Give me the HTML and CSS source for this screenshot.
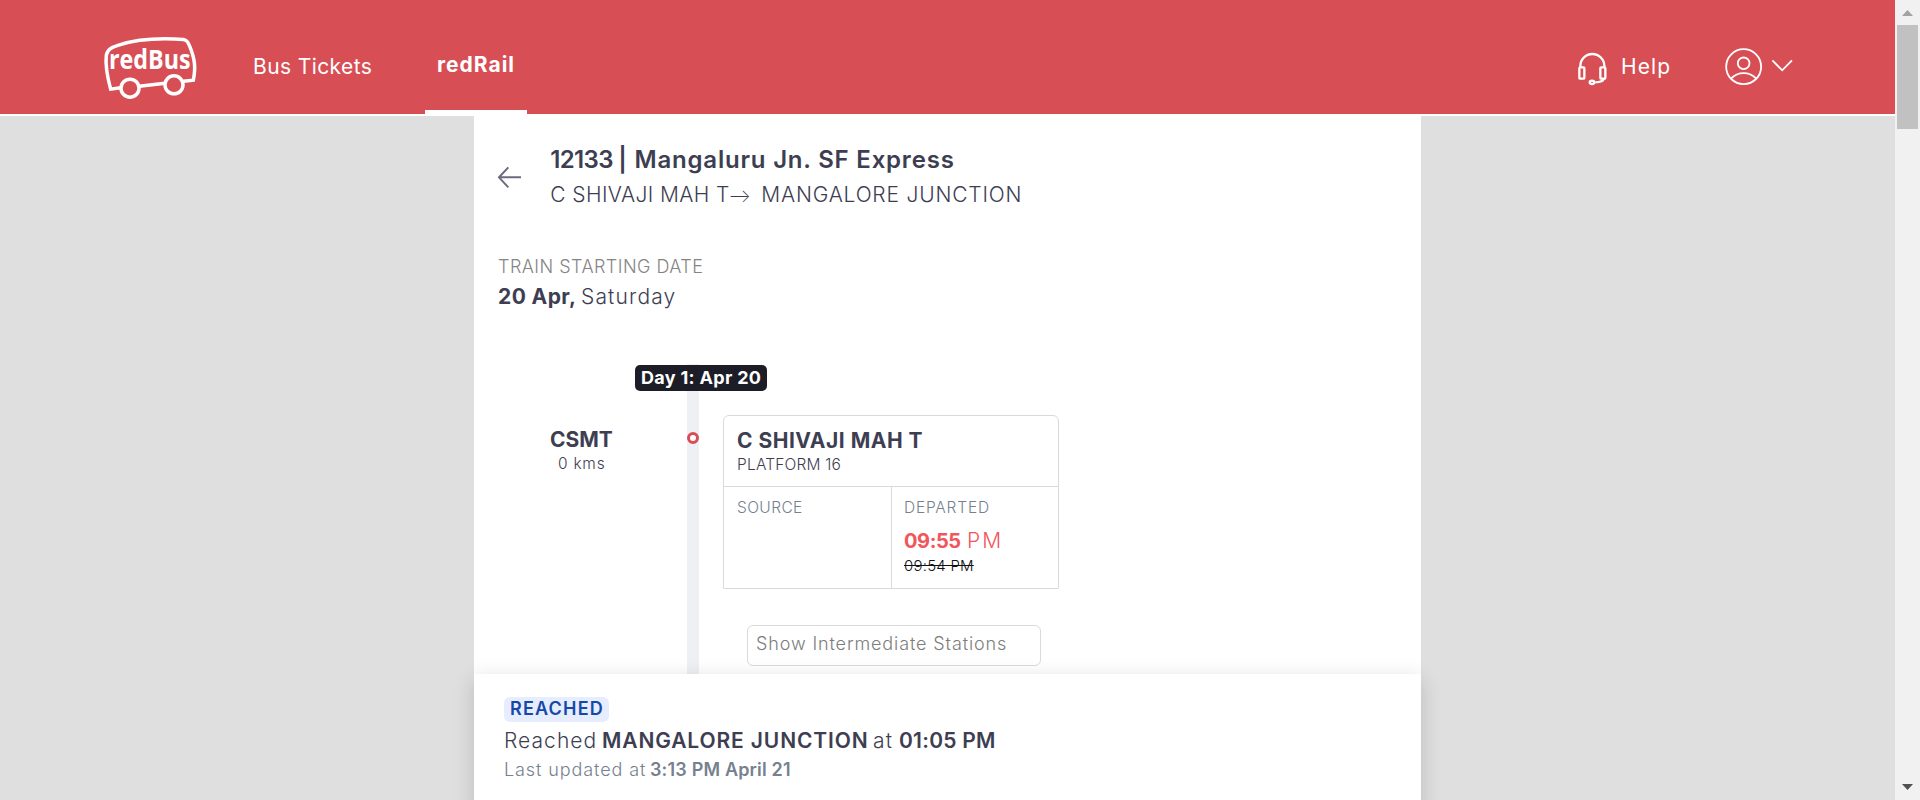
FILE: index.html
```
<!DOCTYPE html>
<html lang="en">
<head>
<meta charset="utf-8">
<title>redRail – Train running status</title>
<link rel="stylesheet" href="styles.css">
</head>
<body>
<div class="page">
  <header class="header">
    <svg class="logo" viewBox="18 18 282 188" fill="none" stroke="#fff" stroke-width="10.500">
      <path d="M68 173L38 177C28 140 22 100 25 75C28 58 40 52 62 45C110 29 170 22 256 28C266 29 270 34 275 48C290 85 294 110 286 150L256 153M124 168L201 159"/>
      <circle cx="96" cy="174" r="27"/>
      <circle cx="228" cy="164" r="27"/>
      <text class="logo-text" x="33" y="118" textLength="245" lengthAdjust="spacingAndGlyphs">redBus</text>
    </svg>
    <nav class="nav">
      <a class="nav-bus">Bus Tickets</a>
      <a class="nav-rail">redRail</a>
    </nav>
    <div class="account">
      <svg class="headset" viewBox="18 36 92 102" fill="none" stroke="#fff" stroke-width="7">
        <path d="M28 82V78A36 36 0 0 1 100 78V82M99 115C97 124 88 127 73 127"/>
        <rect x="25" y="82" width="15" height="34" rx="3"/>
        <rect x="88" y="82" width="15" height="34" rx="3"/>
        <ellipse cx="63" cy="127" rx="7" ry="5"/>
      </svg>
      <a class="help">Help</a>
      <svg class="user" viewBox="28 25 112 112" fill="none" stroke="#fff" stroke-width="5.500">
        <circle cx="84" cy="81" r="52.5"/>
        <circle cx="84" cy="71" r="17.5"/>
        <path d="M46 117C67 95 101 95 122 117"/>
      </svg>
      <svg class="chevron" viewBox="168 56 68 40" fill="none" stroke="#fff" stroke-width="5.500"><path d="M172 60L201.500 90L231 60"/></svg>
    </div>
  </header>

  <main class="sheet">
    <section class="title-row">
      <svg class="back" viewBox="20 20 76 68" fill="none" stroke="#6b6b7f" stroke-width="6"><path d="M92 54H26M54 24L26 54L54 84"/></svg>
      <div>
        <h1 class="train"><span class="number">12133 </span>| Mangaluru Jn. SF Express</h1>
        <div class="route"><span class="from">C SHIVAJI MAH T</span><span class="arrow">→</span><span class="to">MANGALORE JUNCTION</span></div>
      </div>
    </section>
    <section class="start">
      <div class="start-label">TRAIN STARTING DATE</div>
      <div class="start-date"><b>20 Apr,</b><span>Saturday</span></div>
    </section>
    <section class="timeline">
      <div class="stop">
        <div class="code">CSMT</div>
        <div class="kms">0 kms</div>
      </div>
      <div class="track"><span class="day">Day 1: Apr 20</span><span class="dot"></span></div>
      <div class="details">
        <article class="card">
          <div class="card-head">
            <div class="station">C SHIVAJI MAH T</div>
            <div class="platform">PLATFORM 16</div>
          </div>
          <div class="card-body">
            <div class="cell"><div class="label source">SOURCE</div></div>
            <div class="cell">
              <div class="label departed">DEPARTED</div>
              <div class="time"><b>09:55</b><span>PM</span></div>
              <div class="planned">09:54 PM</div>
            </div>
          </div>
        </article>
        <div class="show">Show Intermediate Stations</div>
      </div>
    </section>
  </main>

  <footer class="status">
    <div class="badge">REACHED</div>
    <div class="reached"><span class="r1">Reached</span><b class="r2">MANGALORE JUNCTION</b><span class="r3">at</span><b class="r4">01:05 PM</b></div>
    <div class="updated"><span class="u1">Last updated at</span><b class="u2">3:13 PM April 21</b></div>
  </footer>
</div>
<aside class="scrollbar">
  <svg class="up" viewBox="0 0 11 6"><path d="M0 6L5.500 0L11 6Z" fill="#a3a3a3"/></svg>
  <div class="thumb"></div>
  <svg class="down" viewBox="0 0 11 6"><path d="M0 0L5.500 6L11 0Z" fill="#505050"/></svg>
</aside>
</body>
</html>
```
FILE: styles.css
```
* { box-sizing: border-box; }
body {
  margin: 0;
  height: 800px;
  display: flex;
  overflow: hidden;
  font-family: Inter, "Open Sans", sans-serif;
  font-size: 21px;
  line-height: 24px;
  font-weight: 300;
  color: #3e3e52;
  white-space: nowrap;
}
svg { display: block; flex: none; overflow: visible; }
b { font-weight: 600; }
.page { position: relative; width: 1895px; height: 800px; background: #dfdfdf; overflow: hidden; }

.header {
  display: flex;
  align-items: flex-start;
  height: 116px;
  padding: 0 101px 0 104px;
  background: #d84e55;
  border-bottom: 2px solid #fff;
  color: #fff;
  font-weight: 400;
}
.logo { width: 94px; height: 63px; margin-top: 36px; }
.logo-text { font: 700 78px "Open Sans", sans-serif; fill: #fff; stroke: none; }
.nav { display: flex; margin-left: 55px; }
.nav-bus { width: 172px; padding-top: 55px; letter-spacing: .4px; }
.nav-rail {
  width: 102px;
  height: 114px;
  padding: 53px 0 0 12px;
  border-bottom: 4px solid #fff;
  font-weight: 700;
  letter-spacing: 1px;
}
.account { display: flex; margin-left: auto; }
.headset { width: 30.700px; height: 34px; margin-top: 52px; }
.help { width: 50px; margin: 55px 54px 0 13px; letter-spacing: 1.100px; }
.user { width: 37.300px; height: 37.300px; margin-top: 48.300px; }
.chevron { width: 22.700px; height: 13.300px; margin: 58.700px 0 0 9px; }

.sheet { width: 947px; height: 684px; margin-left: 474px; background: #fff; }
.title-row { display: flex; height: 136px; padding: 29px 0 0 23px; }
.back { width: 25.300px; height: 22.700px; margin: 21px 28px 0 0; }
.train { margin: 0 0 8px; font-size: 24px; line-height: 30px; font-weight: 600; letter-spacing: .8px; }
.number { letter-spacing: -.65px; }
.route { display: flex; }
.from { width: 179px; letter-spacing: .4px; }
.arrow { width: 32px; font-family: Lato, sans-serif; }
.to { letter-spacing: .8px; }
.start { height: 112px; padding: 4px 0 0 24px; }
.start-label { font-size: 18px; line-height: 22px; letter-spacing: .46px; color: #858585; }
.start-date { display: flex; margin-top: 7px; }
.start-date b { width: 83px; font-weight: 700; letter-spacing: .4px; }
.start-date span { letter-spacing: 1.150px; }

.timeline { display: grid; grid-template-columns: 213px 12px 1fr; height: 436px; }
.stop { padding: 64px 0 0 76px; }
.code { font-weight: 700; }
.kms { margin-left: 8px; font-size: 15.500px; line-height: 20px; margin-top: 2px; letter-spacing: .75px; }
.track { position: relative; background: #eff0f3; }
.day {
  position: absolute;
  left: -52px;
  top: 1px;
  width: 132px;
  height: 26px;
  padding-left: 6px;
  border-radius: 5px;
  background: #1d1d27;
  color: #fff;
  font-size: 18px;
  font-weight: 700;
  line-height: 25px;
  letter-spacing: .32px;
}
.dot { position: absolute; left: 0; top: 68px; width: 12px; height: 12px; border: 3px solid #d84e55; border-radius: 50%; background: #fff; }
.details { padding: 51px 0 0 24px; }
.card { width: 336px; height: 174px; border: 1px solid #dadada; border-radius: 6px 6px 0 0; }
.card-head { height: 71px; padding: 13px 0 0 13px; border-bottom: 1px solid #dadada; }
.station { font-weight: 700; letter-spacing: .5px; }
.platform { margin-top: 2px; font-size: 15.500px; line-height: 20px; letter-spacing: .2px; }
.card-body { display: grid; grid-template-columns: 167px 1fr; height: 101px; }
.cell { padding: 11px 0 0 13px; }
.cell + .cell { padding-left: 12px; border-left: 1px solid #dadada; }
.label { font-size: 15.500px; line-height: 20px; color: #75818f; }
.source { letter-spacing: .4px; }
.departed { letter-spacing: .8px; }
.time { display: flex; margin-top: 11px; color: #f1565b; }
.time b { width: 63px; font-size: 20px; font-weight: 700; letter-spacing: -.42px; }
.time span { letter-spacing: 2px; }
.planned { width: 70px; margin-top: 3px; font-size: 15px; line-height: 20px; letter-spacing: .22px; color: #111; text-decoration: line-through; }
.show {
  width: 294px;
  height: 41px;
  margin: 36px 0 0 24px;
  padding-left: 8px;
  border: 1px solid #dadada;
  border-radius: 6px;
  font-size: 18px;
  line-height: 36px;
  letter-spacing: .88px;
  color: #7d7d7d;
}

.status {
  position: absolute;
  left: 474px;
  top: 674px;
  width: 947px;
  height: 140px;
  padding: 23px 0 0 30px;
  background: #fff;
  box-shadow: 0 5px 20px rgba(0, 0, 0, .16);
}
.badge {
  width: 105px;
  height: 25px;
  padding-left: 6px;
  border-radius: 6px;
  background: #e5edff;
  color: #1549a8;
  font-size: 18px;
  font-weight: 600;
  line-height: 24px;
  letter-spacing: 1.200px;
}
.reached { display: flex; margin-top: 7px; }
.r1 { width: 98px; letter-spacing: 1.050px; }
.r2 { width: 271px; letter-spacing: .87px; }
.r3 { width: 26px; letter-spacing: 1.200px; }
.r4 { letter-spacing: .25px; }
.updated { display: flex; margin-top: 6px; font-size: 18px; line-height: 22px; color: #75818f; }
.u1 { width: 146px; letter-spacing: .9px; }
.u2 { letter-spacing: .17px; }

.scrollbar { display: flex; flex-direction: column; align-items: center; width: 25px; height: 800px; background: #f1f1f1; }
.up { width: 11px; height: 6px; margin-top: 10px; }
.thumb { width: 21px; height: 104px; margin-top: 9px; background: #c1c1c1; }
.down { width: 11px; height: 6px; margin: auto 0 10px; }
```
